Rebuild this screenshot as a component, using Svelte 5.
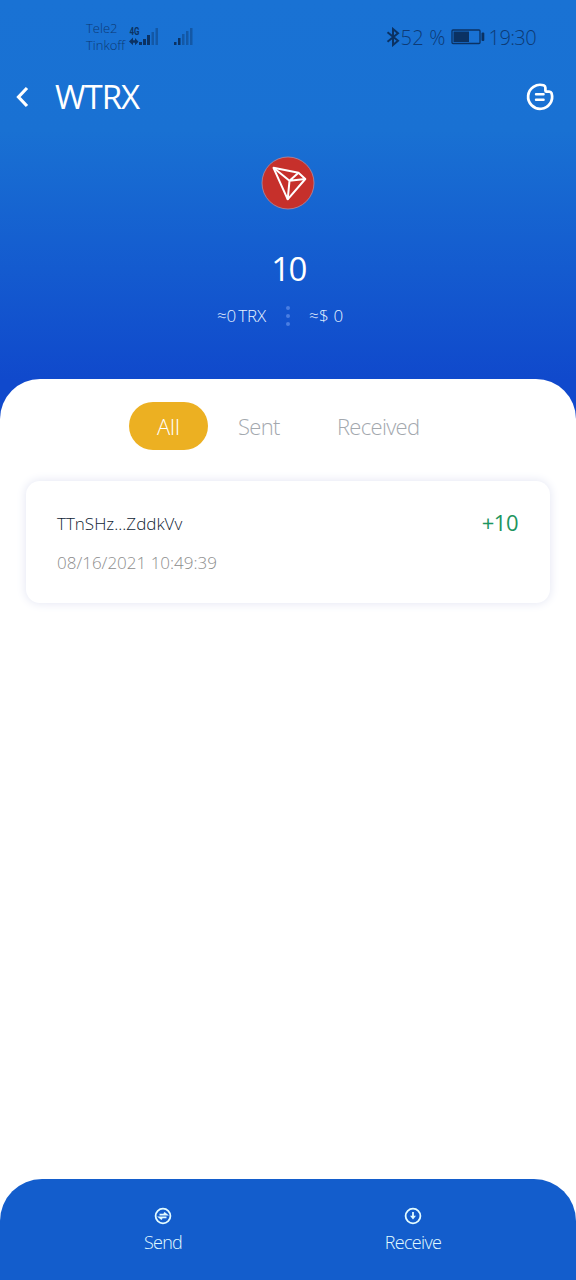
<script>
  let filter = $state("all");

  const filters = [
    { id: "all", label: "All" },
    { id: "sent", label: "Sent" },
    { id: "received", label: "Received" },
  ];

  const transactions = [
    { id: 1, address: "TTnSHz...ZddkVv", date: "08/16/2021 10:49:39", amount: 10 },
  ];

  const visible = $derived(
    transactions.filter((tx) => {
      if (filter === "sent") return tx.amount < 0;
      if (filter === "received") return tx.amount > 0;
      return true;
    })
  );

  const formatAmount = (amount) => (amount > 0 ? `+${amount}` : `${amount}`);
</script>

<div class="screen">
  <div class="hero">
    <div class="status-bar">
      <div class="carriers">
        <span>Tele2</span>
        <span>Tinkoff</span>
      </div>
      <svg class="signals" width="66" height="24" viewBox="0 0 66 24">
        <text x="0.5" y="10" class="net" textLength="10" lengthAdjust="spacingAndGlyphs">4G</text>
        <g fill="#0b3263">
          <path d="M0 16.5l4-4v2.7h2v-2.2l3.5 3.7L6 20.2v-2.4H4v2.4z" />
          <rect x="10" y="17" width="3" height="3" />
          <rect x="14" y="14" width="3" height="6" />
          <rect x="18" y="10" width="3" height="10" />
          <rect x="45" y="17" width="2.5" height="3" />
          <rect x="49" y="13" width="2.5" height="7" />
        </g>
        <g fill="#0b3263" opacity="0.4">
          <rect x="22.5" y="7" width="2.5" height="13" />
          <rect x="26.5" y="3" width="2.5" height="17" />
          <rect x="53" y="9" width="2.5" height="11" />
          <rect x="57" y="6" width="2.5" height="14" />
          <rect x="61" y="3" width="2.5" height="17" />
        </g>
      </svg>
      <div class="system">
        <svg width="14" height="20" viewBox="0 0 14 20" fill="none" stroke="#0b3263" stroke-width="2">
          <path d="M1.5 5.2L12 13.8L7 18V2l5 4.2L1.5 14.8" />
        </svg>
        <span class="percent">52 %</span>
        <svg width="34" height="16" viewBox="0 0 34 16">
          <rect x="1" y="1" width="28" height="13.5" rx="1" fill="none" stroke="#0b3263" stroke-width="1.3" />
          <rect x="2.5" y="2.5" width="15.5" height="10.5" fill="#0b3263" />
          <rect x="30.5" y="3.5" width="2.8" height="8.5" rx="1" fill="#0b3263" />
        </svg>
        <span class="time">19:30</span>
      </div>
    </div>

    <div class="title-bar">
      <button class="icon-btn" aria-label="Back">
        <svg width="14" height="22" viewBox="0 0 14 22" fill="none" stroke="#fff" stroke-width="3.2">
          <path d="M12 2L3.5 11L12 20" />
        </svg>
      </button>
      <h1>WTRX</h1>
      <button class="icon-btn" aria-label="Details">
        <svg width="30" height="30" viewBox="0 0 30 30" fill="none" stroke="#fff" stroke-width="2.7" stroke-linejoin="round" stroke-linecap="round">
          <path d="M18.6 3.3A12 12 0 1 0 26.6 11.3Q26 9.6 24.2 9.6H21.3Q20.4 9.6 20.4 8.4V5.8Q20.4 4 18.6 3.3z" />
          <path d="M11 12.2h7.6M11 17.8h7.6" stroke-width="2.4" />
        </svg>
      </button>
    </div>

    <svg class="logo" width="54" height="54" viewBox="0 0 54 54">
      <circle cx="27" cy="27" r="26" fill="#c6302b" stroke="#b58a9c" stroke-width="0.8" />
      <g fill="none" stroke="#fff" stroke-width="2" stroke-linejoin="round">
        <path d="M12.5 11.8L37.5 16.8L44.3 23L26.7 43.3z" />
        <path d="M12.5 11.8L28.5 24.8L37.5 16.8M44.3 23L28.5 24.8L26.7 43.3" />
      </g>
    </svg>

    <div class="balance">10</div>
    <div class="worth">
      <span class="trx">≈0<i></i>TRX</span>
      <span class="dots"><b></b><b></b><b></b></span>
      <span class="usd">≈$ 0</span>
    </div>
  </div>

  <div class="sheet">
    <div class="filters">
      {#each filters as item (item.id)}
        <button class="filter {item.id}" class:active={filter === item.id} onclick={() => (filter = item.id)}>
          {item.label}
        </button>
      {/each}
    </div>

    {#each visible as tx (tx.id)}
      <div class="tx-card">
        <div>
          <div class="address">{tx.address}</div>
          <div class="date">{tx.date}</div>
        </div>
        <div class="amount">{formatAmount(tx.amount)}</div>
      </div>
    {/each}
  </div>

  <div class="bottom-bar">
    <button class="action">
      <svg width="18" height="18" viewBox="0 0 18 18" fill="none" stroke="#e2fbff" stroke-width="1.8">
        <circle cx="9" cy="9" r="7.4" />
        <path d="M5.5 7.7h7L10 5.6M12.5 10.3h-7L8 12.4" />
      </svg>
      <span>Send</span>
    </button>
    <button class="action receive">
      <svg width="18" height="18" viewBox="0 0 18 18" fill="none" stroke="#e2fbff" stroke-width="1.8">
        <circle cx="9" cy="9" r="7.4" />
        <path d="M9 5v5" />
        <path d="M6 8.8h6L9 12.4z" fill="#e2fbff" stroke="none" />
      </svg>
      <span>Receive</span>
    </button>
  </div>
</div>

<style>
  :global(body) {
    margin: 0;
    background: #fff;
  }

  .screen {
    display: flex;
    flex-direction: column;
    height: 1280px;
    font-family: "Open Sans", "Noto Sans", sans-serif;
    font-weight: 300;
    white-space: nowrap;
    overflow: hidden;
  }

  button {
    padding: 0;
    border: none;
    background: none;
    font: inherit;
    color: inherit;
    cursor: pointer;
  }

  svg {
    display: block;
    flex: none;
  }

  .hero {
    display: flex;
    flex-direction: column;
    align-items: center;
    flex: none;
    height: 422px;
    background: linear-gradient(#1972d4 0, #1971d3 130px, #1049cc 380px, #1049cc 100%);
    color: #fff;
  }

  .status-bar {
    display: flex;
    align-items: center;
    box-sizing: border-box;
    width: 100%;
    height: 74px;
    padding: 0 40px 0 86px;
    color: #0d3a75;
  }

  .carriers {
    display: flex;
    flex-direction: column;
    width: 43px;
    font-size: 13px;
    line-height: 17px;
  }

  .net {
    font: bold 11px "Roboto", sans-serif;
    fill: #0b3263;
  }

  .system {
    display: flex;
    align-items: center;
    margin-left: auto;
    font-size: 20px;
  }

  .percent {
    width: 50px;
    margin-left: 1px;
    letter-spacing: 0.2px;
  }

  .time {
    margin-left: 4px;
    letter-spacing: -0.6px;
  }

  .title-bar {
    display: flex;
    align-items: center;
    box-sizing: border-box;
    width: 100%;
    height: 46px;
    padding: 0 21px 0 15px;
  }

  h1 {
    flex: 1;
    margin: 0 0 0 26px;
    font-size: 33px;
    font-weight: 400;
    line-height: 46px;
    letter-spacing: -1px;
  }

  .logo {
    margin-top: 36px;
  }

  .balance {
    margin: 36px 0 0 1px;
    font-size: 33px;
    font-weight: 400;
    line-height: 46px;
    letter-spacing: -1.5px;
  }

  .worth {
    display: flex;
    align-items: center;
    width: 142px;
    height: 24px;
    margin: 12px 0 1px;
    font-size: 17px;
    line-height: 24px;
    color: #e6f2ff;
  }

  .trx {
    width: 69px;
    letter-spacing: -0.1px;
  }

  .trx i {
    display: inline-block;
    width: 2px;
  }

  .dots {
    display: flex;
    flex-direction: column;
    gap: 4px;
    margin-right: 19px;
  }

  .dots b {
    width: 4px;
    height: 4px;
    border-radius: 50%;
    background: #4a7ee2;
  }

  .usd {
    letter-spacing: 0.2px;
  }

  .sheet {
    flex: 1;
    margin-top: -43px;
    padding: 23px 26px 0;
    border-radius: 40px 40px 0 0;
    background: #fff;
  }

  .filters {
    display: flex;
    margin-left: 103px;
  }

  .filter {
    height: 48px;
    border-radius: 24px;
    font-size: 22px;
    line-height: 49px;
    letter-spacing: -0.7px;
    color: #a3a8ae;
    text-align: left;
  }

  .filter.all {
    width: 79px;
    margin-right: 30px;
    text-align: center;
    letter-spacing: 0;
  }

  .filter.sent {
    width: 99px;
  }

  .filter.active {
    background: #ecb022;
    color: #fff;
  }

  .tx-card {
    display: flex;
    justify-content: space-between;
    box-sizing: border-box;
    width: 524px;
    height: 122px;
    margin-top: 31px;
    padding: 28px 32px 0 31px;
    border-radius: 14px;
    box-shadow: 0 0 10px 1px #e6e8f4;
  }

  .address {
    font-size: 17px;
    line-height: 30px;
    color: #0f2434;
  }

  .date {
    margin-top: 9px;
    font-size: 17px;
    line-height: 30px;
    color: #8d8d8d;
  }

  .amount {
    font-size: 22px;
    font-weight: 400;
    line-height: 27px;
    letter-spacing: -0.5px;
    color: #1e9560;
  }

  .bottom-bar {
    display: flex;
    justify-content: space-between;
    flex: none;
    box-sizing: border-box;
    height: 101px;
    padding: 28px 113px 0;
    border-radius: 42px 42px 0 0;
    background: #135dcc;
    color: #e2fbff;
  }

  .action {
    display: flex;
    flex-direction: column;
    align-items: center;
    width: 100px;
    height: 60px;
    font-size: 18px;
    line-height: 24px;
    letter-spacing: -0.7px;
  }

  .action span {
    margin-top: 5px;
  }
</style>
